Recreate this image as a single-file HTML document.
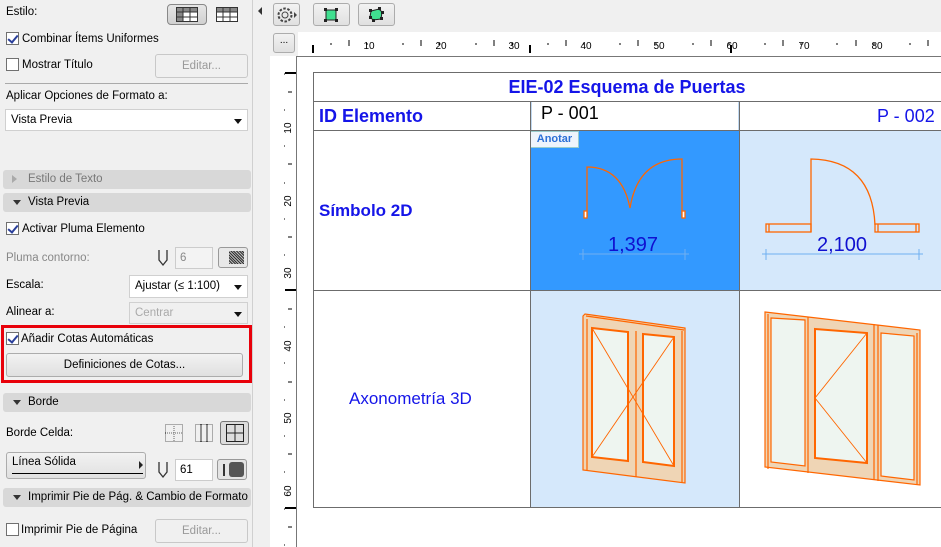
<!DOCTYPE html>
<html><head><meta charset="utf-8"><style>
*{box-sizing:border-box;margin:0;padding:0}
body{width:941px;height:547px;overflow:hidden;background:#f0f0f0;font-family:"Liberation Sans",sans-serif;font-size:11.5px;color:#000;position:relative}
.a{position:absolute}
.t{position:absolute;white-space:nowrap;line-height:14px}
.cb{position:absolute;width:13px;height:13px;border:1px solid #707070;background:#fff}
.cb.on::after{content:"";position:absolute;left:3px;top:0px;width:4px;height:8px;border:solid #2a3f9a;border-width:0 2px 2px 0;transform:rotate(40deg)}
.btn{position:absolute;border:1px solid #acacac;border-radius:3px;background:linear-gradient(#f2f2f2,#e0e0e0);text-align:center;line-height:22px}
.dis{color:#999;background:#f0f0f0;border-color:#c8c8c8}
.hdr{position:absolute;left:3px;width:248px;height:19px;background:#d8d8d8;border-radius:3px;line-height:19px;padding-left:25px}
.hdr::before{content:"";position:absolute;left:10px;top:7px;border:4px solid transparent;border-top:5px solid #333;border-bottom:0}
.hdr.n::before{display:none}
.dd{position:absolute;background:#fff;border:1px solid #d0d0d0;line-height:20px;padding-left:5px}
.dd::after{content:"";position:absolute;right:5px;top:9px;border:4px solid transparent;border-top:5px solid #111;border-bottom:0}
.blue{color:#1515e8;font-weight:bold}
</style></head><body>
<!-- left panel -->
<div class="t" style="left:6px;top:5px">Estilo:</div>
<div class="a" style="left:167px;top:4px;width:40px;height:21px;border:1px solid #888;border-radius:4px;background:linear-gradient(#e6e6e6,#d0d0d0)"></div>
<svg class="a" style="left:176px;top:7px" width="22" height="15"><rect x="0.5" y="0.5" width="21" height="14" fill="#fff" stroke="#333"/><rect x="1" y="1" width="6" height="13" fill="#888"/><rect x="1" y="1" width="20" height="4" fill="#888"/><path d="M0 5H22M0 10H22M7 0V15M14 0V15" stroke="#333"/></svg>
<svg class="a" style="left:216px;top:7px" width="22" height="15"><rect x="0.5" y="0.5" width="21" height="14" fill="#fff" stroke="#333"/><rect x="1" y="1" width="20" height="4" fill="#888"/><path d="M0 5H22M0 10H22M7 0V15M14 0V15" stroke="#333"/></svg>
<div class="cb on" style="left:6px;top:32px"></div><div class="t" style="left:22px;top:32px">Combinar Ítems Uniformes</div>
<div class="cb" style="left:6px;top:58px"></div><div class="t" style="left:22px;top:58px">Mostrar Título</div>
<div class="btn dis" style="left:155px;top:54px;width:93px;height:24px">Editar...</div>
<div class="a" style="left:5px;top:83px;width:243px;height:1px;background:#aaa"></div>
<div class="t" style="left:6px;top:89px">Aplicar Opciones de Formato a:</div>
<div class="dd" style="left:5px;top:109px;width:243px;height:22px">Vista Previa</div>
<div class="hdr n" style="top:170px;color:#777">Estilo de Texto</div>
<div class="a" style="left:12px;top:175px;border:4px solid transparent;border-left:5px solid #aaa;border-right:0;z-index:2"></div>
<div class="hdr" style="top:193px">Vista Previa</div>
<div class="cb on" style="left:6px;top:222px"></div><div class="t" style="left:22px;top:222px">Activar Pluma Elemento</div>
<div class="t" style="left:6px;top:251px;color:#888">Pluma contorno:</div>
<svg class="a" style="left:157px;top:249px" width="12" height="18"><path d="M2 1V11L6 16L10 11V1" fill="none" stroke="#333" stroke-width="1.3"/></svg>
<div class="a" style="left:175px;top:247px;width:38px;height:22px;border:1px solid #ccc;background:#f3f3f3;color:#888;line-height:20px;padding-left:4px">6</div>
<div class="a" style="left:218px;top:247px;width:30px;height:21px;border:1px solid #999;border-radius:3px;background:#e8e8e8"></div>
<div class="a" style="left:229px;top:251px;width:15px;height:13px;background:repeating-linear-gradient(45deg,#333 0 1px,#bbb 1px 2px)"></div>
<div class="t" style="left:6px;top:278px">Escala:</div>
<div class="dd" style="left:129px;top:275px;width:119px;height:23px;line-height:21px">Ajustar (≤ 1:100)</div>
<div class="t" style="left:6px;top:305px">Alinear a:</div>
<div class="dd" style="left:129px;top:302px;width:119px;height:22px;background:#f0f0f0;color:#aaa">Centrar</div>
<div class="a" style="left:1px;top:325px;width:251px;height:58px;border:3px solid #e8000a"></div>
<div class="cb on" style="left:6px;top:332px"></div><div class="t" style="left:21px;top:332px">Añadir Cotas Automáticas</div>
<div class="btn" style="left:6px;top:353px;width:237px;height:24px">Definiciones de Cotas...</div>
<div class="hdr" style="top:393px">Borde</div>
<div class="t" style="left:6px;top:426px">Borde Celda:</div>
<svg class="a" style="left:165px;top:424px" width="18" height="18"><rect x="0.5" y="0.5" width="17" height="17" fill="none" stroke="#666" stroke-dasharray="1 1"/><path d="M9 0V18M0 9H18" stroke="#666" stroke-dasharray="1 1"/></svg>
<svg class="a" style="left:195px;top:424px" width="18" height="18"><rect x="0.5" y="0.5" width="17" height="17" fill="none" stroke="#666" stroke-dasharray="1 1"/><path d="M6 0V18M12 0V18" stroke="#333"/></svg>
<div class="a" style="left:220px;top:421px;width:29px;height:24px;border:1px solid #777;border-radius:3px;background:#ddd"></div>
<svg class="a" style="left:226px;top:424px" width="18" height="18"><rect x="0.5" y="0.5" width="17" height="17" fill="none" stroke="#222"/><path d="M9 0V18M0 9H18" stroke="#222"/></svg>
<div class="btn" style="left:6px;top:452px;width:140px;height:27px;text-align:left;padding-left:5px;line-height:18px">Línea Sólida<div class="a" style="left:5px;top:20px;width:131px;height:1px;background:#000"></div><div class="a" style="right:2px;top:8px;border:4px solid transparent;border-left:4px solid #222;border-right:0"></div></div>
<svg class="a" style="left:157px;top:461px" width="12" height="18"><path d="M2 1V11L6 16L10 11V1" fill="none" stroke="#333" stroke-width="1.3"/></svg>
<div class="a" style="left:175px;top:459px;width:38px;height:22px;border:1px solid #ccc;background:#fff;line-height:20px;padding-left:4px">61</div>
<div class="a" style="left:217px;top:459px;width:30px;height:21px;border:1px solid #999;border-radius:3px;background:#e4e4e4"></div>
<div class="a" style="left:223px;top:464px;width:2px;height:12px;background:#333"></div>
<div class="a" style="left:229px;top:462px;width:15px;height:15px;background:#555;border-radius:3px"></div>
<div class="hdr" style="top:488px">Imprimir Pie de Pág. &amp; Cambio de Formato</div>
<div class="cb" style="left:6px;top:523px"></div><div class="t" style="left:21px;top:523px">Imprimir Pie de Página</div>
<div class="btn dis" style="left:155px;top:519px;width:93px;height:24px">Editar...</div>
<!-- divider strip -->
<div class="a" style="left:252px;top:0;width:1px;height:547px;background:#d0d0d0"></div>
<div class="a" style="left:258px;top:7px;border:4px solid transparent;border-right:4px solid #333;border-left:0"></div>
<!-- toolbar -->
<div class="btn" style="left:273px;top:3px;width:27px;height:23px"></div>
<svg class="a" style="left:275px;top:5px" width="24" height="20"><circle cx="10" cy="10" r="3" fill="none" stroke="#444"/><circle cx="10" cy="10" r="6.5" fill="none" stroke="#444" stroke-dasharray="2.5 1.6" stroke-width="2"/><path d="M19 7L22 10L19 13Z" fill="#444"/></svg>
<div class="btn" style="left:313px;top:3px;width:37px;height:23px"></div>
<svg class="a" style="left:323px;top:7px" width="16" height="16"><rect x="3" y="3" width="10" height="10" fill="#40e090" stroke="#222"/><g fill="#222"><rect x="1" y="1" width="3" height="3"/><rect x="12" y="1" width="3" height="3"/><rect x="1" y="12" width="3" height="3"/><rect x="12" y="12" width="3" height="3"/></g></svg>
<div class="btn" style="left:358px;top:3px;width:37px;height:23px"></div>
<svg class="a" style="left:368px;top:6px" width="17" height="17"><path d="M3 5L11 3L14 6L13 13L5 14L2 11Z" fill="#40e090" stroke="#222"/><g fill="#222"><rect x="1" y="3" width="3" height="3"/><rect x="10" y="1" width="3" height="3"/><rect x="13" y="5" width="3" height="3"/><rect x="12" y="11" width="3" height="3"/><rect x="4" y="13" width="3" height="3"/><rect x="1" y="10" width="3" height="3"/></g></svg>
<!-- rulers -->
<div class="btn" style="left:273px;top:33px;width:22px;height:20px;line-height:14px;font-size:10px">...</div>
<div class="a" style="left:298px;top:32px;width:643px;height:24px;background:#fff"></div>
<div class="a" style="left:270px;top:56px;width:27px;height:491px;background:#fff"></div>
<div class="a" style="left:297px;top:56px;width:644px;height:491px;background:#fff"></div>
<div class="a" style="left:297px;top:56px;width:644px;height:1px;background:#777"></div>
<div class="a" style="left:296px;top:56px;width:1px;height:491px;background:#777"></div>
<svg class="a" style="left:0;top:0" width="941" height="547" font-family="Liberation Sans" font-size="10">
<g stroke="#000">
<path d="M313 45V53M530 45V53M731 45V53M296 73H285M296 290H285M296 508H285" stroke-width="2"/>
<path d="M349 40v6M421 40v6M494 40v6M566 40v6M638 40v6M711 40v6M783 40v6M856 40v6M928 40v6"/>
<path d="M331 43v2M367 43v2M403 43v2M439 43v2M476 43v2M512 43v2M548 43v2M584 43v2M620 43v2M656 43v2M693 43v2M729 43v2M765 43v2M801 43v2M837 43v2M874 43v2M910 43v2"/>
<path d="M288 92h4M288 164h4M288 237h4M288 309h4M288 382h4M288 454h4M288 527h4"/>
<path d="M284 74h1M284 110h1M284 146h1M284 183h1M284 219h1M284 255h1M284 327h1M284 363h1M284 400h1M284 436h1M284 472h1M284 509h1M284 545h1"/>
</g>
<g text-anchor="middle">
<text x="369" y="49">10</text><text x="441" y="49">20</text><text x="514" y="49">30</text><text x="586" y="49">40</text><text x="659" y="49">50</text><text x="732" y="49">60</text><text x="804" y="49">70</text><text x="877" y="49">80</text>
<g transform="rotate(-90)"><text x="-128" y="291">10</text><text x="-201" y="291">20</text><text x="-273" y="291">30</text><text x="-346" y="291">40</text><text x="-418" y="291">50</text><text x="-491" y="291">60</text></g>
</g>
</svg>
<!-- table -->
<div class="a" style="left:531px;top:131px;width:208px;height:159px;background:#3399ff"></div>
<div class="a" style="left:739px;top:131px;width:202px;height:159px;background:#d5e8fb"></div>
<div class="a" style="left:531px;top:290px;width:208px;height:217px;background:#d5e8fb"></div>
<div class="a" style="left:531px;top:101px;width:208px;height:29px;border:1px solid #c0d8f0;border-bottom:0"></div>
<div class="a" style="left:530px;top:131px;width:49px;height:17px;background:#eef4fc;border:1px solid #9cc;color:#2b6fd6;font-weight:bold;font-size:11px;line-height:15px;text-align:center">Anotar</div>
<svg class="a" style="left:0;top:0" width="941" height="547">
<g stroke="#6c6c6c" fill="none"><path d="M313.5 72V507.5H941M313 72.5H941M313 101.5H941M313 130.5H941M313 290.5H941M530.5 101V507M739.5 101V507"/></g>
</svg>
<div class="t blue" style="left:313px;top:77px;width:628px;text-align:center;font-size:18px;line-height:20px">EIE-02 Esquema de Puertas</div>
<div class="t blue" style="left:319px;top:106px;font-size:18px;line-height:20px">ID Elemento</div>
<div class="t" style="left:541px;top:103px;font-size:18px;line-height:20px">P - 001</div>
<div class="t" style="left:877px;top:106px;font-size:18px;line-height:20px;color:#1515e8">P - 002</div>
<div class="t blue" style="left:319px;top:201px;font-size:17px;line-height:20px">Símbolo 2D</div>
<div class="t" style="left:349px;top:389px;font-size:17px;line-height:20px;color:#1515e8">Axonometría 3D</div>
<svg class="a" style="left:0;top:0" width="941" height="547" font-family="Liberation Sans">
<g fill="none" stroke="#ff6600" stroke-width="1.3">
<path d="M587 217V167Q622 167 630 208Q638 159 682 159V217"/>
<rect x="584" y="211" width="3" height="7" fill="#fff"/><rect x="682" y="211" width="3" height="7" fill="#fff"/>
<path d="M811 232V159Q872 160 875 225"/>
<rect x="766" y="224" width="45" height="8"/><path d="M769 224V232"/>
<rect x="875" y="224" width="44" height="8"/><path d="M916 224V232M878 224V232"/>
</g>
<g stroke="#70b0f0" stroke-width="1"><path d="M579 254H689M583 249V260M685 249V260"/><path d="M762 254H923M766 249V260M919 249V260"/></g>
<text x="633" y="251" text-anchor="middle" font-size="20" fill="#1010d0">1,397</text>
<text x="842" y="251" text-anchor="middle" font-size="20" fill="#1010d0">2,100</text>
<g stroke="#ff6600" stroke-width="1.2">
<path d="M583 316L585 314L685 328L685 483L583 470Z" fill="#efd5b5"/>
<path d="M586 316L684 330M587 319V470M682 331V482" fill="none"/>
<path d="M592 328L628 332V461L592 457Z" fill="#eef5f0" stroke-width="2"/>
<path d="M643 334L674 337V466L643 462Z" fill="#eef5f0" stroke-width="2"/>
<path d="M636 331V477" fill="none"/>
<path d="M592 328L674 466M674 337L592 457" fill="none" stroke-width="0.9"/>
</g>
<g stroke="#ff6600" stroke-width="1.2">
<path d="M765 312L920 330V485L765 467Z" fill="#efd5b5"/>
<path d="M768 314V469M808 317V473M874 324V480M878 325V481M917 333V485" fill="none"/>
<path d="M771 318L805 320V466L771 462Z" fill="#eef5f0"/>
<path d="M815 329L867 333V463L815 458Z" fill="#eef5f0" stroke-width="2"/>
<path d="M881 333L914 336V480L881 476Z" fill="#eef5f0"/>
<path d="M867 333L815 398L867 463" fill="none" stroke-width="0.9"/>
</g>
</svg>
</body></html>
